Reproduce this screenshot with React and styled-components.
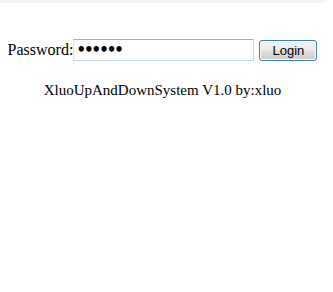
import React from "react";
import styled, { createGlobalStyle } from "styled-components";

const GlobalStyle = createGlobalStyle`
  html, body {
    margin: 0;
    padding: 0;
    background: #fff;
  }
  body {
    font-family: "Liberation Serif", "Times New Roman", serif;
    font-size: 16px;
    color: #000;
  }
`;

const Page = styled.div`
  width: 325px;
  border-top: 3px solid #f5f5f5;
`;

const LoginForm = styled.form`
  display: flex;
  align-items: center;
  justify-content: center;
  padding-top: 36px;
`;

const Label = styled.label`
  line-height: 20px;
`;

const PasswordInput = styled.input`
  box-sizing: border-box;
  width: 181px;
  height: 22px;
  margin: 0 5px 0 0;
  padding: 0 2px;
  border: 1px solid #c5dbec;
  border-top-color: #abadb3;
  border-left-color: #dbe3eb;
  background: #fff;
  font-family: "DejaVu Sans", sans-serif;
  font-size: 15px;
  font-weight: bold;
  letter-spacing: -2px;
  color: #000;
  outline: none;
`;

const LoginButton = styled.button`
  box-sizing: border-box;
  width: 58px;
  height: 21px;
  margin: 0;
  padding: 0;
  border: 1px solid #3c7fb1;
  border-radius: 3px;
  background: linear-gradient(
    to bottom,
    #f2f2f2 0%,
    #ebebeb 48%,
    #dddddd 52%,
    #cfcfcf 100%
  );
  box-shadow: inset 0 0 0 1px #fcfcfc;
  font-family: "Liberation Sans", Arial, sans-serif;
  font-size: 13px;
  color: #000;
`;

const Footer = styled.p`
  margin: 20px 0 0;
  text-align: center;
  font-size: 15px;
  line-height: 18px;
`;

export default function App() {
  return (
    <>
      <GlobalStyle />
      <Page>
        <LoginForm onSubmit={e => e.preventDefault()}>
          <Label htmlFor="pwd">Password:</Label>
          <PasswordInput id="pwd" type="password" defaultValue="123456" />
          <LoginButton type="submit">Login</LoginButton>
        </LoginForm>
        <Footer>XluoUpAndDownSystem V1.0 by:xluo</Footer>
      </Page>
    </>
  );
}
